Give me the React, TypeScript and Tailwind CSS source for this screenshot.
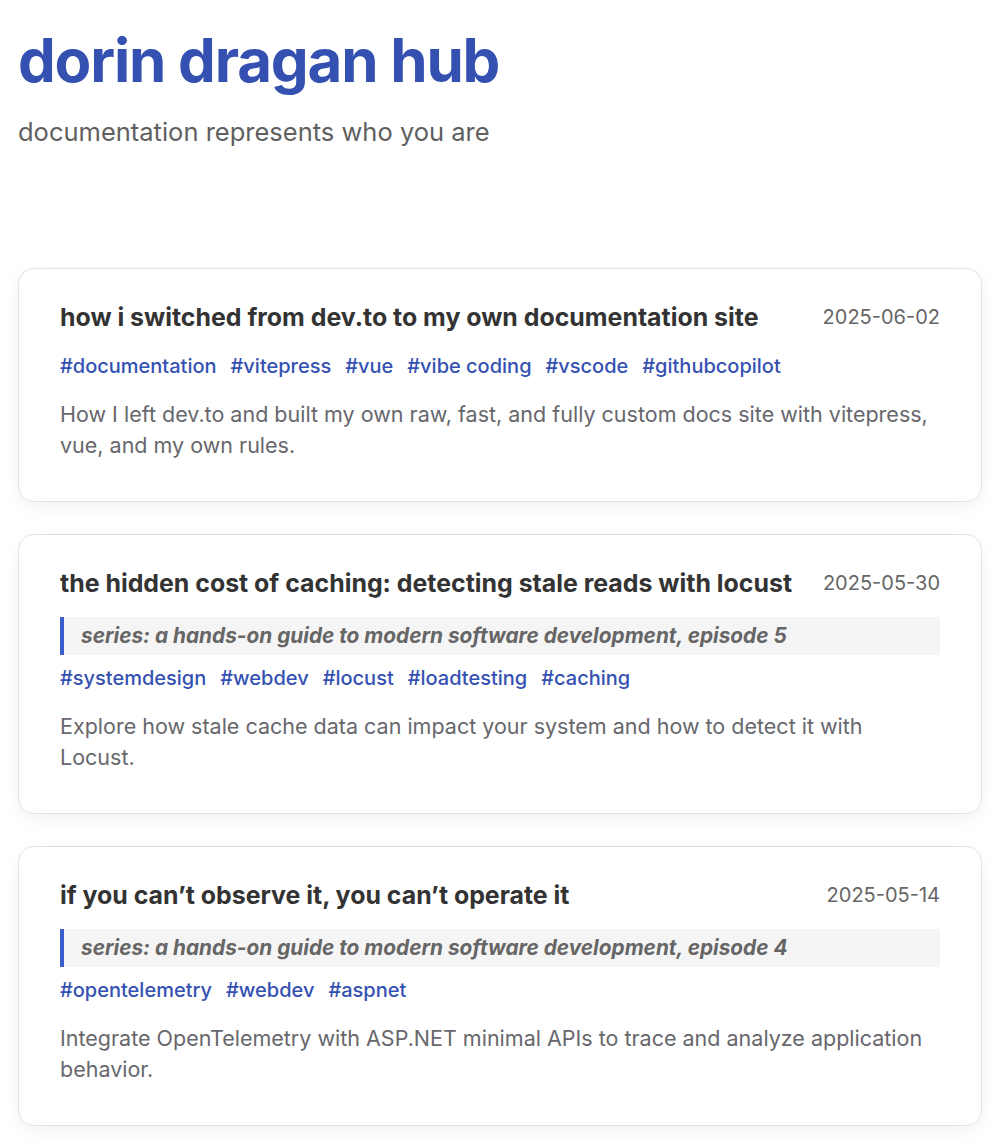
import React from "react";

type Post = {
  title: string;
  date: string;
  series?: string;
  tags: string[];
  desc: string;
};

const posts: Post[] = [
  {
    title: "how i switched from dev.to to my own documentation site",
    date: "2025-06-02",
    tags: ["documentation", "vitepress", "vue", "vibe coding", "vscode", "githubcopilot"],
    desc: "How I left dev.to and built my own raw, fast, and fully custom docs site with vitepress, vue, and my own rules.",
  },
  {
    title: "the hidden cost of caching: detecting stale reads with locust",
    date: "2025-05-30",
    series: "series: a hands-on guide to modern software development, episode 5",
    tags: ["systemdesign", "webdev", "locust", "loadtesting", "caching"],
    desc: "Explore how stale cache data can impact your system and how to detect it with Locust.",
  },
  {
    title: "if you can\u2019t observe it, you can\u2019t operate it",
    date: "2025-05-14",
    series: "series: a hands-on guide to modern software development, episode 4",
    tags: ["opentelemetry", "webdev", "aspnet"],
    desc: "Integrate OpenTelemetry with ASP.NET minimal APIs to trace and analyze application behavior.",
  },
];

function Card({ p }: { p: Post }) {
  return (
    <div className="rounded-2xl border border-[#e2e2e3] bg-white px-[41px] pt-[30px] pb-[40px] shadow-[0_6px_18px_rgba(0,0,0,0.05)]">
      <div className="flex items-center justify-between gap-6">
        <h2 className="text-[24.9px] font-bold leading-[36px] text-[#333333]">{p.title}</h2>
        <span className="shrink-0 text-[20px] text-[#666666]">{p.date}</span>
      </div>
      {p.series && (
        <div className="mt-[16px] border-l-4 border-[#3a5ccc] bg-[#f5f5f5] py-[6px] pl-[17px] text-[20.8px] font-bold italic leading-[26px] text-[#666666]">
          {p.series}
        </div>
      )}
      <div className={`flex flex-wrap gap-x-[14px] text-[20px] font-medium leading-[24px] text-[#3451b2] ${p.series ? "mt-[11px]" : "mt-[19px]"}`}>
        {p.tags.map((t) => (
          <span key={t}>#{t}</span>
        ))}
      </div>
      <p className="mt-[21px] text-[21.5px] leading-[31px] text-[#67676c]">{p.desc}</p>
    </div>
  );
}

export default function App() {
  return (
    <div className="min-h-[1146px] bg-white px-[18px] pt-[20px] pb-[20px] font-['Inter',sans-serif]">
      <h1 className="text-[60px] font-bold leading-[80px] tracking-[-0.02em] text-[#3451b2]">dorin dragan hub</h1>
      <p className="mt-[16px] text-[25.5px] leading-[32px] text-[#5f5f5f]">documentation represents who you are</p>
      <div className="mt-[120px] flex flex-col gap-[32px]">
        {posts.map((p) => (
          <Card key={p.date} p={p} />
        ))}
      </div>
    </div>
  );
}
